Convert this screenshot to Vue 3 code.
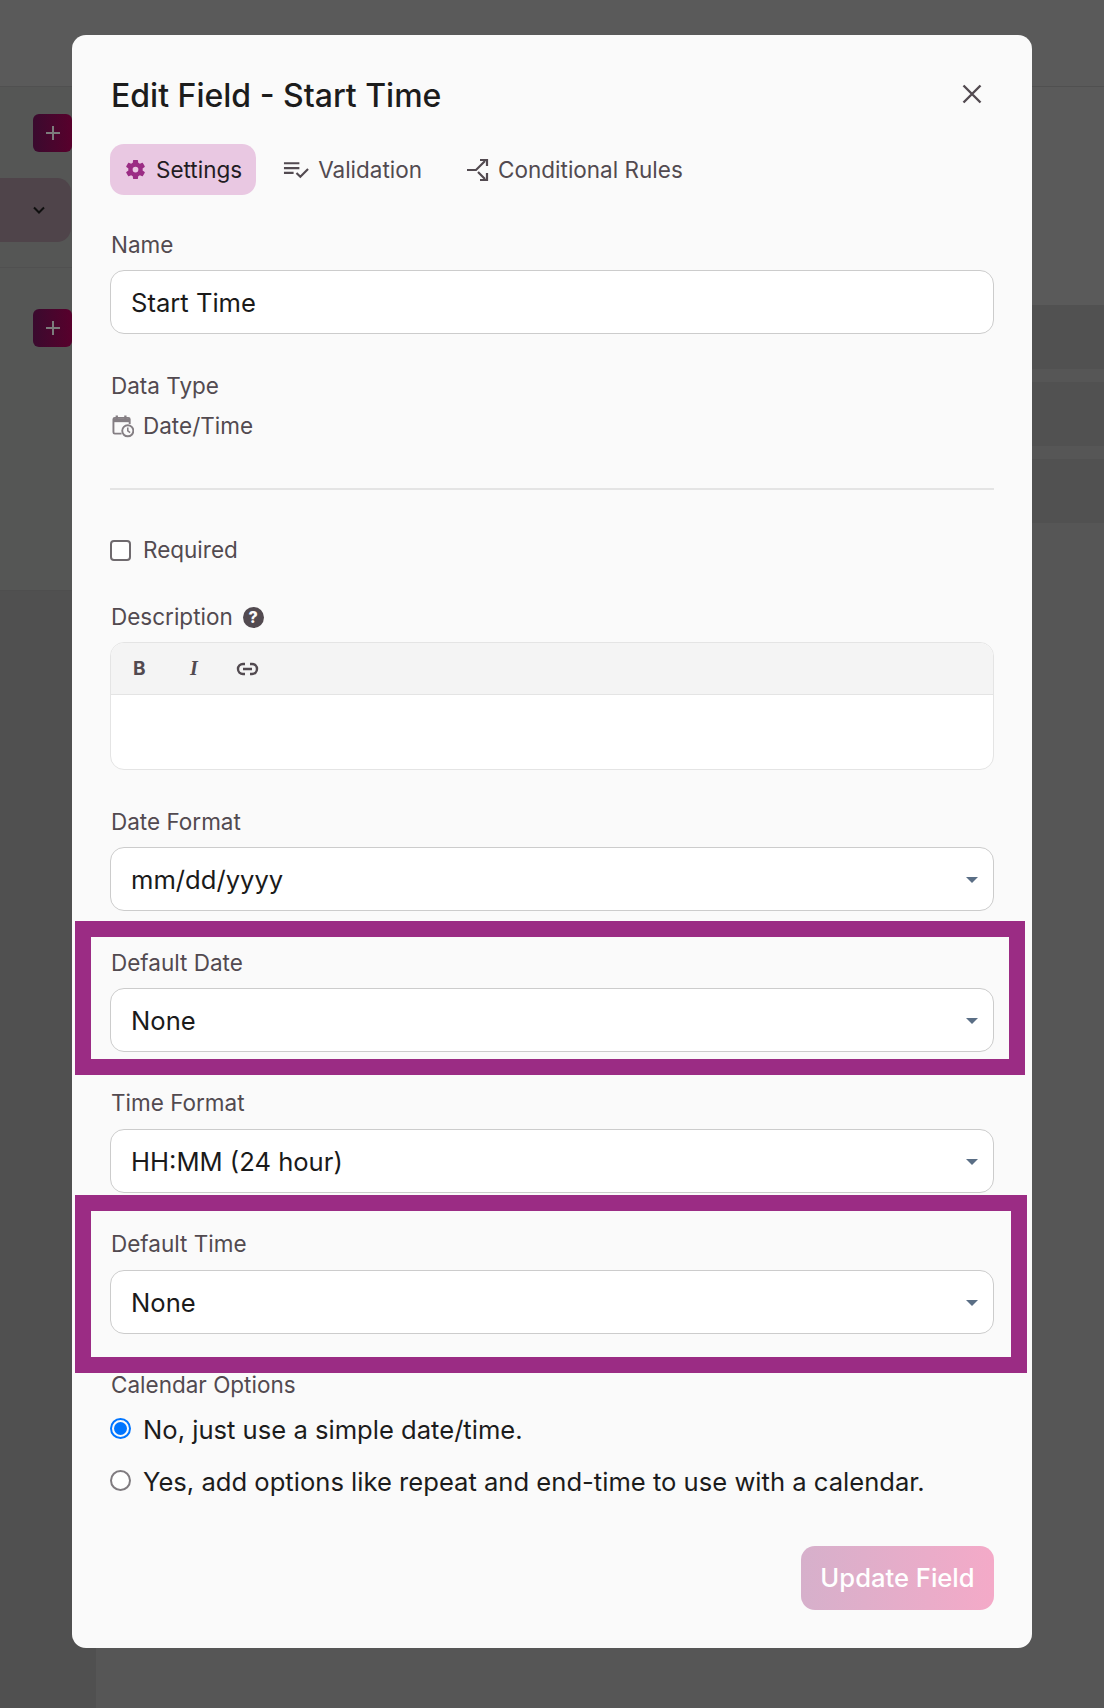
<script setup>
const gear = "M12 15A3 3 0 1 1 12 9A3 3 0 0 1 12 15M19.43 12.97C19.47 12.65 19.5 12.33 19.5 12C19.5 11.67 19.47 11.34 19.43 11L21.54 9.37C21.73 9.22 21.78 8.95 21.66 8.73L19.66 5.27C19.54 5.05 19.27 4.96 19.05 5.05L16.56 6.05C16.04 5.66 15.5 5.32 14.87 5.07L14.5 2.42C14.46 2.18 14.25 2 14 2H10C9.75 2 9.54 2.18 9.5 2.42L9.13 5.07C8.5 5.32 7.96 5.66 7.44 6.05L4.95 5.05C4.73 4.96 4.46 5.05 4.34 5.27L2.34 8.73C2.21 8.95 2.27 9.22 2.46 9.37L4.57 11C4.53 11.34 4.5 11.67 4.5 12C4.5 12.33 4.53 12.65 4.57 12.97L2.46 14.63C2.27 14.78 2.21 15.05 2.34 15.27L4.34 18.73C4.46 18.95 4.73 19.03 4.95 18.95L7.44 17.94C7.96 18.34 8.5 18.68 9.13 18.93L9.5 21.58C9.54 21.82 9.75 22 10 22H14C14.25 22 14.46 21.82 14.5 21.58L14.87 18.93C15.5 18.67 16.04 18.34 16.56 17.94L19.05 18.95C19.27 19.03 19.54 18.95 19.66 18.73L21.66 15.27C21.78 15.05 21.73 14.78 21.54 14.63Z"
</script>

<template>
  <div class="page">
    <div class="topbar"></div>
    <div class="under">
      <aside class="side">
        <div class="side-top">
          <div class="add add-a"><svg width="16" height="16" viewBox="0 0 16 16"><path d="M8 1V15M1 8H15" stroke="#7c7c7c" stroke-width="2"/></svg></div>
          <div class="pill"><svg width="14" height="9" viewBox="0 0 14 9"><path d="M2 1.500L7 6.500L12 1.500" fill="none" stroke="#0f0f0f" stroke-width="2"/></svg></div>
          <div class="side-line"></div>
          <div class="add add-b"><svg width="16" height="16" viewBox="0 0 16 16"><path d="M8 1V15M1 8H15" stroke="#7c7c7c" stroke-width="2"/></svg></div>
        </div>
      </aside>
      <main class="rows">
        <div class="rows-top"></div>
        <div class="band"></div>
        <div class="band"></div>
        <div class="band"></div>
      </main>
    </div>

    <section class="modal">
      <header class="head">
        <h2 class="title">Edit Field - Start Time</h2>
        <svg class="close" width="20" height="20" viewBox="0 0 20 20"><path d="M1.500 1.500L18.500 18.500M18.500 1.500L1.500 18.500" stroke="#524a50" stroke-width="2.400"/></svg>
      </header>

      <nav class="tabs">
        <div class="tab active">
          <svg width="23" height="23" viewBox="0 0 24 24"><path :d="gear" fill="#9b2c84" fill-rule="evenodd"/></svg>
          <span>Settings</span>
        </div>
        <div class="tab">
          <svg width="26" height="20" viewBox="0 0 27 20"><path d="M1 3H17M1 8H17M1 13H11" stroke="#524a50" stroke-width="2.200"/><path d="M14 13L18 17L26 9" fill="none" stroke="#524a50" stroke-width="2.200"/></svg>
          <span>Validation</span>
        </div>
        <div class="tab tab-rules">
          <svg width="22" height="24" viewBox="0 0 22 24"><path d="M0 12H9L18 3M18 21L11 14" fill="none" stroke="#524a50" stroke-width="2.200"/><path d="M13 2H20V8M20 15V22H13" fill="none" stroke="#524a50" stroke-width="2.200"/></svg>
          <span>Conditional Rules</span>
        </div>
      </nav>

      <div class="field f-name">
        <label class="lab">Name</label>
        <div class="box">Start Time</div>
      </div>

      <div class="field f-type">
        <label class="lab">Data Type</label>
        <div class="type">
          <svg width="22" height="24" viewBox="0 0 23 24"><path d="M5 1V5M14 1V5" stroke="#847e83" stroke-width="2.400"/><path d="M10 20H3A1.500 1.500 0 0 1 1.500 18.500V5A1.500 1.500 0 0 1 3 3.500H17A1.500 1.500 0 0 1 18.500 5V10" fill="none" stroke="#847e83" stroke-width="2"/><path d="M2 4H18V8H2Z" fill="#847e83"/><circle cx="16.500" cy="17" r="5.800" fill="none" stroke="#847e83" stroke-width="2"/><path d="M16.500 13.500V17.200L19 19" fill="none" stroke="#847e83" stroke-width="1.600"/></svg>
          <span>Date/Time</span>
        </div>
      </div>

      <hr class="rule" />

      <label class="check">
        <input type="checkbox" class="cb" />
        <span>Required</span>
      </label>

      <div class="field f-desc">
        <div class="lab with-help">
          <span>Description</span>
          <span class="help">?</span>
        </div>
        <div class="editor">
          <div class="tools">
            <span class="t-b">B</span>
            <span class="t-i">I</span>
            <svg width="23" height="14" viewBox="0 0 23 14"><path d="M9 2H7A5 5 0 0 0 7 12H9M14 2H16A5 5 0 0 1 16 12H14M7 7H16" fill="none" stroke="#524a50" stroke-width="2.400"/></svg>
          </div>
          <div class="area"></div>
        </div>
      </div>

      <div class="field f-date">
        <label class="lab">Date Format</label>
        <div class="box sel">mm/dd/yyyy</div>
      </div>

      <div class="hl hl-a">
        <label class="lab">Default Date</label>
        <div class="box sel">None</div>
      </div>

      <div class="field f-time">
        <label class="lab">Time Format</label>
        <div class="box sel">HH:MM (24 hour)</div>
      </div>

      <div class="hl hl-b">
        <label class="lab">Default Time</label>
        <div class="box sel">None</div>
      </div>

      <div class="cal">
        <label class="lab">Calendar Options</label>
        <label class="opt opt-a"><input type="radio" class="rd" name="cal" checked /><span>No, just use a simple date/time.</span></label>
        <label class="opt opt-b"><input type="radio" class="rd" name="cal" /><span>Yes, add options like repeat and end-time to use with a calendar.</span></label>
      </div>

      <footer class="foot">
        <button class="update" type="button">Update Field</button>
      </footer>
    </section>
  </div>
</template>

<style>
html, body { margin: 0; background: #565656; }
</style>

<style scoped>
* { box-sizing: border-box; }
.page {
  position: relative;
  width: 1104px;
  height: 1708px;
  overflow: hidden;
  background: #565656;
  font-family: Inter, "Liberation Sans", sans-serif;
}
.topbar { height: 87px; background: #5a5a5a; border-bottom: 1px solid #505050; }
.under { display: grid; grid-template-columns: 96px 1fr; height: 1621px; }
.side { background: #505050; }
.side-top { height: 504px; background: #555655; border-bottom: 1px solid #4e4e4e; display: flex; flex-direction: column; }
.add {
  width: 39px; height: 38px; margin-left: 33px; border-radius: 6px;
  background: linear-gradient(90deg, #3a0a2e, #58002c);
  display: flex; align-items: center; justify-content: center;
}
.add-a { margin-top: 27px; }
.pill {
  width: 71px; height: 64px; margin-top: 26px; border-radius: 0 14px 14px 0;
  background: #4f444a; display: flex; align-items: center; justify-content: flex-end; padding-right: 25px;
}
.side-line { height: 1px; margin-top: 25px; background: #505050; }
.add-b { margin-top: 41px; }
.rows { background: #565656; display: flex; flex-direction: column; gap: 13px; }
.rows-top { height: 218px; margin-bottom: -13px; background: #5a5a5a; flex: none; }
.band { height: 64px; background: #515151; flex: none; }

.modal {
  position: absolute;
  left: 72px; top: 35px;
  width: 960px; height: 1613px;
  border-radius: 14px;
  background: #fafafa;
  padding: 42px 38px 0;
}
.head { display: flex; justify-content: space-between; align-items: flex-start; }
.title { margin: 0 0 0 1px; font-size: 32px; line-height: 38px; font-weight: 500; color: #1c1c1c; }
.close { margin: 7px 12px 0 0; }
.tabs { display: flex; margin-top: 29px; gap: 14px; }
.tab {
  height: 51px; padding: 0 13px; border-radius: 14px;
  display: flex; align-items: center; gap: 9px;
  font-size: 22.5px; color: #524a50; font-weight: 400;
}
.tab.active { background: #e9c8e2; color: #221c22; padding-left: 14px; padding-right: 14px; }
.tab-rules { margin-left: 5px; }
.lab { display: block; margin-left: 1px; font-size: 22.5px; line-height: 26px; color: #524a50; }
.box {
  margin-top: 12px; height: 64px; border: 1px solid #cccccc; border-radius: 14px;
  background: #fff; padding: 0 20px;
  display: flex; align-items: center;
  font-size: 25.6px; color: #1a1a1a; position: relative;
}
.sel::after {
  content: ""; position: absolute; right: 15px; top: 29px;
  border-left: 6px solid transparent; border-right: 6px solid transparent;
  border-top: 6px solid #5a6e85;
}
.f-name { margin-top: 37px; }
.f-type { margin-top: 39px; }
.type { display: flex; align-items: center; gap: 9px; margin-top: 14px; padding-left: 2px; font-size: 22.5px; line-height: 26px; color: #524a50; }
.rule { border: 0; height: 2px; background: #e4e4e4; margin: 49px 0 0; }
.check { display: flex; align-items: center; gap: 12px; margin-top: 47px; font-size: 22.5px; line-height: 26px; color: #524a50; }
.cb {
  appearance: none; margin: 0; width: 21px; height: 21px;
  border: 2px solid #6f6a6e; border-radius: 4px; background: #fff;
}
.f-desc { margin-top: 41px; }
.with-help { display: flex; align-items: center; gap: 10px; }
.help {
  width: 21px; height: 21px; border-radius: 50%; background: #524a50; color: #fafafa;
  font-size: 16px; font-weight: 800; line-height: 21px; text-align: center;
}
.editor { margin-top: 12px; border: 1px solid #e4e4e4; border-radius: 14px; overflow: hidden; background: #fff; }
.tools {
  height: 52px; background: #f4f4f4; border-bottom: 1px solid #e4e4e4;
  display: flex; align-items: center; padding-left: 22px; color: #524a50;
}
.t-b { font-size: 19px; font-weight: 700; width: 54px; }
.t-i { font-family: "Liberation Serif", serif; font-size: 20px; font-weight: 700; font-style: italic; width: 49px; padding-left: 3px; }
.area { height: 74px; }
.f-date { margin-top: 39px; }
.hl { border: 16px solid #9b2c84; margin-left: -35px; padding-left: 19px; }
.hl-a { margin-top: 10px; height: 154px; margin-right: -31px; padding-right: 15px; padding-top: 13px; }
.hl-b { margin-top: 2px; height: 178px; margin-right: -33px; padding-right: 17px; padding-top: 20px; }
.hl-b .box { margin-top: 13px; }
.f-time { margin-top: 15px; }
.f-time .box { margin-top: 13px; }
.cal { margin-top: -1px; }
.opt { display: flex; align-items: center; gap: 12px; font-size: 25.6px; line-height: 30px; color: #1c1c1c; }
.opt-a { margin-top: 17px; }
.opt-b { margin-top: 22px; }
.rd {
  appearance: none; margin: 0 0 4px; width: 21px; height: 21px; border-radius: 50%;
  border: 2px solid #807c80; background: #fff;
}
.rd:checked { border-color: #0075ff; background: #0075ff; background-clip: content-box; padding: 2px; }
.foot { display: flex; justify-content: flex-end; margin-top: 49px; }
.update {
  width: 193px; height: 64px; border: 0; border-radius: 14px; padding: 0 0 2px;
  background: linear-gradient(90deg, #d6b0cb, #f4aac8);
  color: #fff; font: 500 25.6px Inter, sans-serif;
}
</style>
